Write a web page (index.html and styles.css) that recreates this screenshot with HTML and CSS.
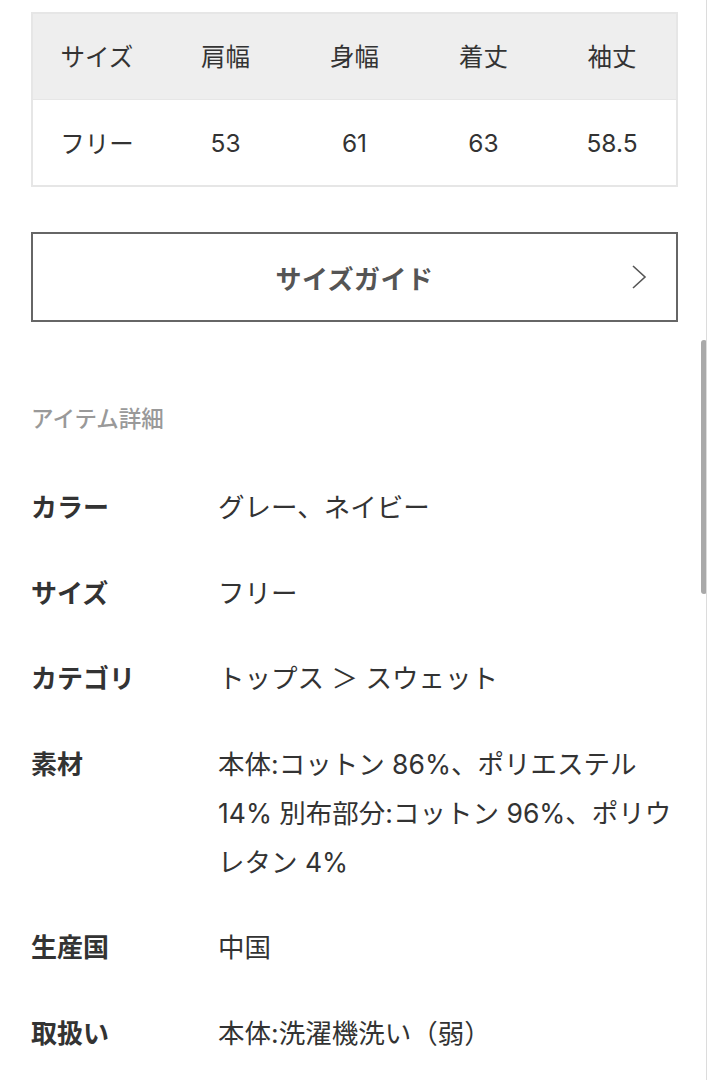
FILE: index.html
```html
<!DOCTYPE html>
<html lang="ja">
<head>
<meta charset="utf-8">
<link rel="stylesheet" href="styles.css">
</head>
<body>
<div class="page">
  <table class="size-table">
    <thead>
      <tr><th>サイズ</th><th>肩幅</th><th>身幅</th><th>着丈</th><th>袖丈</th></tr>
    </thead>
    <tbody>
      <tr><td>フリー</td><td>53</td><td>61</td><td>63</td><td>58.5</td></tr>
    </tbody>
  </table>

  <a class="guide-btn" href="#">
    <span class="guide-label">サイズガイド</span>
    <svg class="chev" width="16" height="26" viewBox="0 0 16 26"><path d="M2 2 L14 13 L2 24" fill="none" stroke="#555" stroke-width="1.6"/></svg>
  </a>

  <h2 class="section-title">アイテム詳細</h2>

  <dl class="details">
    <div class="row"><dt>カラー</dt><dd>グレー、ネイビー</dd></div>
    <div class="row"><dt>サイズ</dt><dd>フリー</dd></div>
    <div class="row"><dt>カテゴリ</dt><dd>トップス ＞ スウェット</dd></div>
    <div class="row"><dt>素材</dt><dd>本体:コットン 86%、ポリエステル 14% 別布部分:コットン 96%、ポリウレタン 4%</dd></div>
    <div class="row"><dt>生産国</dt><dd>中国</dd></div>
    <div class="row"><dt>取扱い</dt><dd>本体:洗濯機洗い（弱）</dd></div>
  </dl>
</div>
<div class="scroll-track"><div class="scroll-thumb"></div></div>
</body>
</html>
```

FILE: styles.css
```css
html, body {
  margin: 0;
  padding: 0;
  background: #fff;
  overflow: hidden;
}
body {
  font-family: "Inter", "Noto Sans CJK JP", "Noto Sans", sans-serif;
  color: #333;
}
.page {
  padding: 12px 30px 0 31px;
}
.size-table {
  width: 100%;
  border-collapse: collapse;
  border: 2px solid #e6e6e6;
  table-layout: fixed;
}
.size-table th,
.size-table td {
  height: 85px;
  padding: 0;
  text-align: center;
  font-size: 24.5px;
  font-weight: 400;
  color: #333;
}
.size-table th {
  background: #eeeeee;
  height: 82px;
  padding-bottom: 3px;
}
.size-table td {
  background: #fff;
  border-top: 1px solid #e6e6e6;
}
.guide-btn {
  margin-top: 45px;
  height: 86px;
  border: 2px solid #666;
  display: flex;
  align-items: center;
  justify-content: center;
  position: relative;
  text-decoration: none;
}
.guide-label {
  font-size: 26px;
  font-weight: 700;
  color: #555;
  letter-spacing: 0.5px;
}
.chev {
  position: absolute;
  right: 29px;
  top: 30px;
}
.section-title {
  margin: 81px 0 0 0;
  font-size: 22.5px;
  line-height: 32px;
  font-weight: 500;
  color: #999;
}
.details {
  margin: 48px 0 0 0;
  display: flex;
  flex-direction: column;
  gap: 36.5px;
}
.row {
  display: flex;
  font-size: 26px;
  line-height: 49px;
}
.row dt {
  width: 187px;
  flex: none;
  font-weight: 700;
  color: #333;
}
.row dd {
  margin: 0;
  flex: 1;
  max-width: 455px;
  font-size: 26.5px;
  color: #333;
}
.scroll-track {
  position: fixed;
  top: 0;
  right: 0;
  width: 12px;
  height: 100%;
}
.scroll-track::after {
  content: "";
  position: absolute;
  right: 1px;
  top: 0;
  bottom: 0;
  width: 1px;
  background: #dcdcdc;
}
.scroll-thumb {
  position: absolute;
  left: 5px;
  top: 340px;
  width: 6px;
  height: 254px;
  border-radius: 3px;
  background: #a9a9a9;
}
```
